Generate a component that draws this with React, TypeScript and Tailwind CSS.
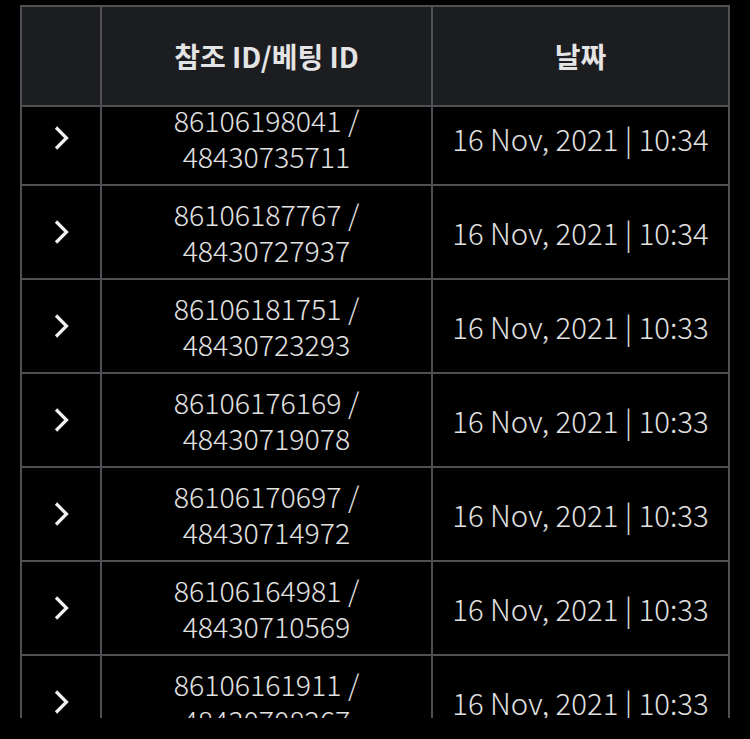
import { useMemo } from "react";

type BetRow = { refId: string; betId: string; date: string };

const rows: BetRow[] = [
  { refId: "86106198041", betId: "48430735711", date: "16 Nov, 2021 | 10:34" },
  { refId: "86106187767", betId: "48430727937", date: "16 Nov, 2021 | 10:34" },
  { refId: "86106181751", betId: "48430723293", date: "16 Nov, 2021 | 10:33" },
  { refId: "86106176169", betId: "48430719078", date: "16 Nov, 2021 | 10:33" },
  { refId: "86106170697", betId: "48430714972", date: "16 Nov, 2021 | 10:33" },
  { refId: "86106164981", betId: "48430710569", date: "16 Nov, 2021 | 10:33" },
  { refId: "86106161911", betId: "48430708267", date: "16 Nov, 2021 | 10:33" },
];

function Chevron() {
  return (
    <svg width="16" height="26" viewBox="0 0 16 26" fill="none">
      <polyline points="3,2.5 13.5,13 3,23.5" stroke="#f2f2f2" strokeWidth="3.2" strokeLinecap="butt" strokeLinejoin="miter" />
    </svg>
  );
}

export default function App() {
  const list = useMemo(() => rows, []);

  return (
    <main
      className="h-[739px] overflow-hidden bg-black pt-[5px] pl-[20px] pr-[20px]"
      style={{ fontFamily: '"Noto Sans CJK KR", "Noto Sans", sans-serif' }}
    >
      <div className="w-[710px] border-x-2 border-t-2 border-[#505054] bg-[#505054]">
        {/* header */}
        <div className="grid grid-cols-[78px_329px_295px] gap-x-[2px] bg-[#505054]">
          <div className="h-[98px] bg-[#1c1d21]" />
          <div className="flex h-[98px] items-center justify-center bg-[#1c1d21] text-[28px] font-bold text-[#e4e4e4]">
            참조 ID/베팅 ID
          </div>
          <div className="flex h-[98px] items-center justify-center bg-[#1c1d21] text-[28px] font-bold text-[#e4e4e4]">
            날짜
          </div>
        </div>

        {/* body, scrolled a bit under the header */}
        <div className="mt-[2px] h-[611px] overflow-hidden">
          <div className="-mt-[15px] flex flex-col gap-y-[2px]">
            {list.map((row) => (
              <div key={row.refId} className="grid grid-cols-[78px_329px_295px] gap-x-[2px]">
                <div className="flex h-[92px] items-center justify-center bg-black">
                  <Chevron />
                </div>
                <div className="flex h-[92px] flex-col items-center justify-center bg-black text-center text-[28.5px] font-light leading-[36px] text-[#e2e2e2]">
                  <span>{row.refId} /</span>
                  <span>{row.betId}</span>
                </div>
                <div className="flex h-[92px] items-center justify-center bg-black text-[29.3px] font-light leading-[36px] text-[#e2e2e2]">
                  {row.date}
                </div>
              </div>
            ))}
          </div>
        </div>
      </div>
    </main>
  );
}
